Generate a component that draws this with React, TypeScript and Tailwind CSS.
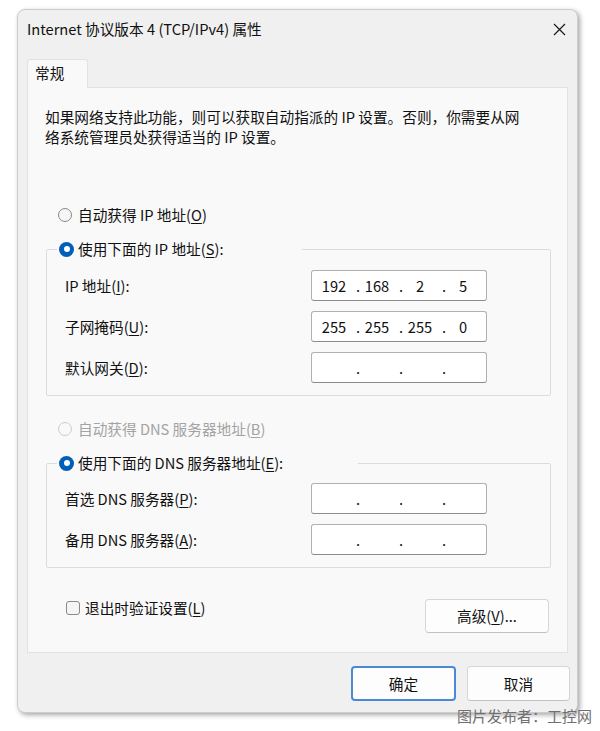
import React, { Fragment } from "react";

const Key = ({ children }: { children: React.ReactNode }) => (
  <span className="underline underline-offset-[2px] decoration-1">{children}</span>
);

const Radio = ({ checked, disabled }: { checked?: boolean; disabled?: boolean }) =>
  checked ? (
    <span className="w-[15px] h-[15px] rounded-full bg-[#005fb8] flex items-center justify-center shrink-0">
      <span className="w-[6px] h-[6px] rounded-full bg-white" />
    </span>
  ) : (
    <span
      className={`w-[14px] h-[14px] rounded-full border shrink-0 ${
        disabled ? "border-[#cdcdcd] bg-[#f9f9f9]" : "border-[#8a8a8a] bg-[#f5f5f5]"
      }`}
    />
  );

const IpField = ({ parts }: { parts: string[] }) => (
  <div className="w-[176px] h-[31px] bg-white border border-[#b0b0b0] border-b-[#8c8c8c] rounded-[3px] flex items-center pl-[4px] text-[#111]">
    {parts.map((p, i) => (
      <Fragment key={i}>
        <span className="w-[36px] text-center">{p}</span>
        {i < 3 && <span className="w-[7px] pl-[4px]">.</span>}
      </Fragment>
    ))}
  </div>
);

const Row = ({ label, parts }: { label: React.ReactNode; parts: string[] }) => (
  <div className="flex items-center">
    <div className="w-[246px] whitespace-nowrap">{label}</div>
    <IpField parts={parts} />
  </div>
);

const empty = ["", "", "", ""];

export default function App() {
  return (
    <div className="relative w-[600px] h-[731px] bg-white text-[14.67px] text-[#111] font-['Noto_Sans_CJK_SC','Noto_Sans',sans-serif]">
      <div className="pt-[9px] pl-[17px]">
        <div className="w-[561px] h-[704px] rounded-[8px] border border-[#cdcdcd] bg-[#f0f0f0] shadow-[2px_2px_5px_rgba(0,0,0,0.35)] flex flex-col">
          {/* title bar */}
          <div className="h-[38px] flex items-center justify-between pl-[9px] pr-[11px]">
            <span className="whitespace-nowrap">Internet 协议版本 4 (TCP/IPv4) 属性</span>
            <svg width="13" height="13" viewBox="0 0 13 13" className="text-[#1b1b1b]">
              <path d="M1 1 L12 12 M12 1 L1 12" stroke="currentColor" strokeWidth="1.2" fill="none" />
            </svg>
          </div>

          {/* tabs */}
          <div className="mt-[11px] ml-[9px] flex">
            <div className="relative z-10 -mb-px w-[61px] h-[29px] pl-[7px] pb-[2px] flex items-center border border-b-0 border-[#e2e2e2] bg-[#f9f9f9] rounded-t-[3px]">
              常规
            </div>
          </div>

          {/* panel */}
          <div className="mx-[9px] h-[566px] border border-[#e2e2e2] bg-[#f9f9f9] flex flex-col">
            <p className="ml-[17px] mt-[19px] leading-[20px] whitespace-nowrap">
              如果网络支持此功能，则可以获取自动指派的 IP 设置。否则，你需要从网
              <br />
              络系统管理员处获得适当的 IP 设置。
            </p>

            <div className="ml-[30px] mt-[58px] h-[20px] flex items-center gap-[6px]">
              <Radio />
              <span>
                自动获得 IP 地址(<Key>O</Key>)
              </span>
            </div>

            <fieldset className="ml-[18px] mt-[14px] w-[505px] border border-[#dcdcdc] rounded-[2px] pl-[18px] pt-[11px] pb-[12px] flex flex-col gap-[10px]">
              <legend className="ml-[-8px] pl-[2px] w-[245px] h-[20px] flex items-center gap-[4px]">
                <Radio checked />
                <span>
                  使用下面的 IP 地址(<Key>S</Key>):
                </span>
              </legend>
              <Row
                label={
                  <>
                    IP 地址(<Key>I</Key>):
                  </>
                }
                parts={["192", "168", "2", "5"]}
              />
              <Row
                label={
                  <>
                    子网掩码(<Key>U</Key>):
                  </>
                }
                parts={["255", "255", "255", "0"]}
              />
              <Row
                label={
                  <>
                    默认网关(<Key>D</Key>):
                  </>
                }
                parts={empty}
              />
            </fieldset>

            <div className="ml-[30px] mt-[23px] h-[20px] flex items-center gap-[6px] text-[#a3a3a3]">
              <Radio disabled />
              <span>
                自动获得 DNS 服务器地址(<Key>B</Key>)
              </span>
            </div>

            <fieldset className="ml-[18px] mt-[14px] w-[505px] border border-[#dcdcdc] rounded-[2px] pl-[18px] pt-[10px] pb-[12px] flex flex-col gap-[10px]">
              <legend className="ml-[-8px] pl-[2px] w-[301px] h-[20px] flex items-center gap-[4px]">
                <Radio checked />
                <span>
                  使用下面的 DNS 服务器地址(<Key>E</Key>):
                </span>
              </legend>
              <Row
                label={
                  <>
                    首选 DNS 服务器(<Key>P</Key>):
                  </>
                }
                parts={empty}
              />
              <Row
                label={
                  <>
                    备用 DNS 服务器(<Key>A</Key>):
                  </>
                }
                parts={empty}
              />
            </fieldset>

            <div className="mt-[31px] ml-[38px] mr-[18px] flex justify-between items-start">
              <div className="-mt-px h-[20px] flex items-center gap-[5px]">
                <span className="w-[14px] h-[14px] rounded-[3px] border border-[#8a8a8a] bg-[#f5f5f5]" />
                <span>
                  退出时验证设置(<Key>L</Key>)
                </span>
              </div>
              <button className="w-[124px] h-[34px] rounded-[4px] border border-[#d6d6d6] border-b-[#c2c2c2] bg-[#fdfdfd] flex items-center justify-center">
                <span>
                  高级(<Key>V</Key>)...
                </span>
              </button>
            </div>
          </div>

          {/* footer buttons */}
          <div className="mt-[13px] pr-[7px] flex justify-end gap-[11px]">
            <button className="w-[105px] h-[35px] rounded-[4px] border-2 border-[#4a8ad4] bg-[#fdfdfd] flex items-center justify-center">
              确定
            </button>
            <button className="w-[103px] h-[35px] rounded-[4px] border border-[#d6d6d6] border-b-[#c2c2c2] bg-[#fdfdfd] flex items-center justify-center">
              取消
            </button>
          </div>
        </div>
      </div>

      <span className="absolute left-[457px] top-[706px] text-[15px] leading-[20px] text-[#707070] whitespace-nowrap">
        图片发布者：工控网
      </span>
    </div>
  );
}
